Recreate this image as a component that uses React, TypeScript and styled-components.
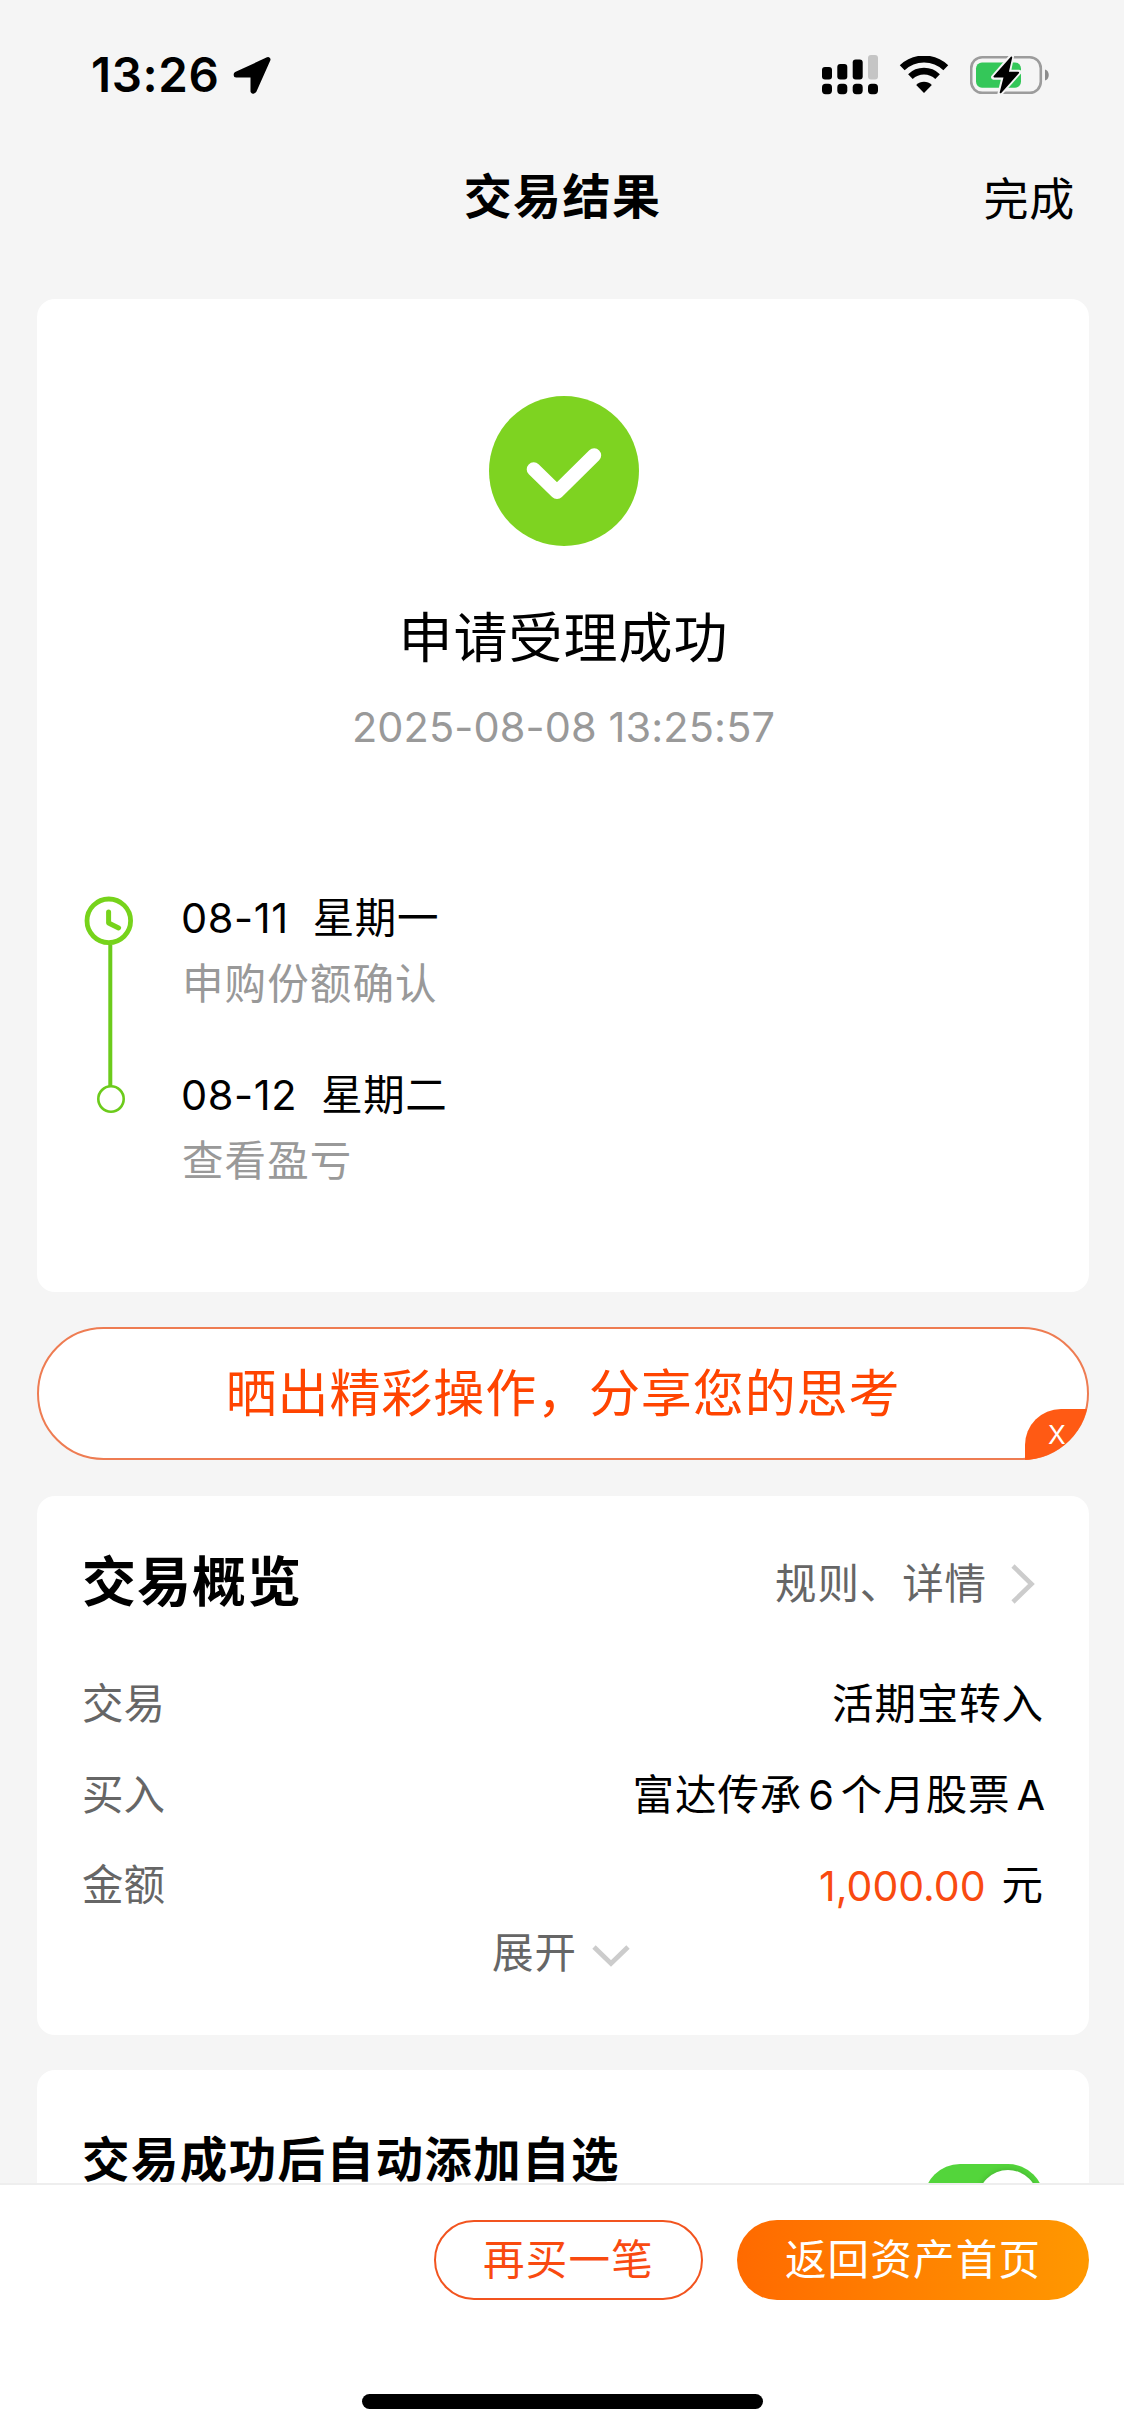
import React from "react";
import styled, { createGlobalStyle } from "styled-components";

const GlobalStyle = createGlobalStyle`
  *, *::before, *::after { box-sizing: border-box; }
  html, body { margin: 0; padding: 0; background: #f5f5f5; }
  body { font-family: Inter, "Noto Sans CJK SC", sans-serif; line-height: 1.2; color: #000; }
`;

const Screen = styled.div`
  width: 1124px;
  height: 2432px;
  display: flex;
  flex-direction: column;
  background: #f5f5f5;
  overflow: hidden;
`;

const StatusBar = styled.div`
  flex: none;
  height: 150px;
  padding: 0 74px 0 91px;
  display: flex;
  align-items: center;
  justify-content: space-between;
`;

const StatusGroup = styled.div<{ $gap: number }>`
  display: flex;
  align-items: center;
  gap: ${(p) => p.$gap}px;
`;

const Time = styled.span`
  font-size: 47.5px;
  font-weight: 600;
  line-height: 60px;
  letter-spacing: 0.6px;
`;

const NavBar = styled.header`
  flex: none;
  height: 93px;
  padding: 0 49px 0 50px;
  display: grid;
  grid-template-columns: 1fr auto 1fr;
  align-items: center;
`;

const NavTitle = styled.h1`
  grid-column: 2;
  margin: 0;
  font-size: 48px;
  font-weight: 700;
  line-height: 60px;
  letter-spacing: 1.4px;
`;

const NavAction = styled.button`
  justify-self: end;
  padding: 6px 0 0;
  border: 0;
  background: none;
  font: inherit;
  font-size: 45px;
  line-height: 60px;
  letter-spacing: 0.7px;
  color: #000;
`;

const Content = styled.main`
  flex: 1;
  min-height: 0;
  overflow: hidden;
  padding: 56px 35px 0 37px;
  display: flex;
  flex-direction: column;
`;

const Card = styled.section`
  flex: none;
  border-radius: 18px;
  background: #fff;
`;

const ResultCard = styled(Card)`
  height: 993px;
  padding: 97px 46px 0 47px;
  display: flex;
  flex-direction: column;
  align-items: center;
`;

const ResultTitle = styled.h2`
  margin: 58px 0 0;
  font-size: 54px;
  font-weight: 400;
  line-height: 70px;
  letter-spacing: 1px;
`;

const ResultTime = styled.div`
  margin-top: 23px;
  font-size: 41.5px;
  line-height: 60px;
  letter-spacing: 0.1px;
  color: #999;
`;

const Timeline = styled.div`
  align-self: stretch;
  margin-top: 129px;
  display: flex;
  gap: 47px;
`;

const Steps = styled.div`
  display: flex;
  flex-direction: column;
  gap: 47px;
`;

const Step = styled.div`
  display: flex;
  flex-direction: column;
`;

const StepDate = styled.div`
  display: flex;
  gap: 24px;
  font-size: 41.5px;
  line-height: 65px;
  letter-spacing: 0.6px;
`;

const StepNote = styled.div`
  padding: 1px 0 0 1px;
  font-size: 41.5px;
  line-height: 64px;
  letter-spacing: 1.1px;
  color: #999;
`;

const ShareBanner = styled.div`
  flex: none;
  position: relative;
  height: 133px;
  margin: 35px 0 36px;
  border: 2px solid #ee7c52;
  border-radius: 67px;
  background: #fff;
  display: flex;
  align-items: center;
  justify-content: center;
`;

const BannerText = styled.span`
  font-size: 51px;
  line-height: 76px;
  letter-spacing: 0.9px;
  color: #ff4400;
`;

const BannerCorner = styled.div`
  position: absolute;
  right: -2px;
  bottom: -2px;
  width: 67px;
  height: 67px;
  border-bottom-right-radius: 67px;
  overflow: hidden;
  display: flex;
  align-items: flex-end;
  justify-content: flex-end;
`;

const BannerClose = styled.button`
  width: 64px;
  height: 51px;
  padding: 0 0 0 23px;
  border: 0;
  border-top-left-radius: 36px;
  background: #ff5a14;
  color: #fff;
  font: inherit;
  font-size: 26px;
  line-height: 51px;
  text-align: left;
`;

const OverviewCard = styled(Card)`
  height: 539px;
  padding: 52px 45px 0 45px;
  display: flex;
  flex-direction: column;
`;

const OverviewHead = styled.div`
  height: 70px;
  margin-bottom: 42px;
  display: flex;
  align-items: center;
  justify-content: space-between;
`;

const OverviewTitle = styled.h2`
  margin: 0;
  font-size: 54px;
  font-weight: 700;
  letter-spacing: 1px;
`;

const DetailLink = styled.a`
  display: flex;
  align-items: center;
  gap: 24px;
  padding: 3px 9px 0 0;
  font-size: 41.5px;
  letter-spacing: 0.9px;
  color: #666;
`;

const Row = styled.div`
  height: 90.4px;
  display: flex;
  align-items: center;
  justify-content: space-between;
  font-size: 41.5px;
`;

const RowLabel = styled.span`
  color: #666;
`;

const RowValue = styled.span`
  display: flex;
  gap: 16px;
  letter-spacing: 0.9px;
  white-space: nowrap;
`;

const Latin = styled.span`
  margin: 0 6px;

  &:last-child {
    margin-right: -2px;
  }
`;

const Amount = styled.span`
  font-size: 41px;
  line-height: 50px;
  color: #f94a10;
  letter-spacing: 0;
`;

const Expand = styled.button`
  align-self: center;
  margin-top: -7px;
  padding: 0 4px 0 0;
  height: 60px;
  border: 0;
  background: none;
  display: flex;
  align-items: center;
  gap: 15px;
  font: inherit;
  font-size: 41.5px;
  letter-spacing: 1px;
  color: #666;
`;

const FavoriteCard = styled(Card)`
  height: 220px;
  margin-top: 35px;
  padding: 55px 45px 0 45px;
  display: flex;
  align-items: flex-start;
  justify-content: space-between;
`;

const FavoriteTitle = styled.h2`
  margin: 0;
  font-size: 47.5px;
  font-weight: 700;
  line-height: 70px;
  letter-spacing: 1.4px;
`;

const Switch = styled.div`
  width: 120px;
  height: 72px;
  margin-top: 39px;
  padding: 6px;
  border-radius: 36px;
  background: #53d53b;
  display: flex;
  justify-content: flex-end;
`;

const Knob = styled.div`
  width: 60px;
  height: 60px;
  border-radius: 50%;
  background: #fff;
  box-shadow: 0 0 6px rgba(0, 0, 0, 0.2);
`;

const Footer = styled.footer`
  flex: none;
  height: 249px;
  padding: 35px 35px 23px 36px;
  border-top: 2px solid #eeeeee;
  background: #fff;
  display: flex;
  flex-direction: column;
  align-items: center;
  justify-content: space-between;
`;

const FooterActions = styled.div`
  align-self: flex-end;
  display: flex;
  gap: 34px;
`;

const PillButton = styled.button<{ $primary?: boolean }>`
  width: ${(p) => (p.$primary ? 352 : 269)}px;
  height: 80px;
  padding: 1px 0 0;
  border: ${(p) => (p.$primary ? "0" : "2px solid #f2541f")};
  border-radius: 40px;
  background: ${(p) =>
    p.$primary ? "linear-gradient(90deg, #ff6a00, #ff9800)" : "#fff"};
  color: ${(p) => (p.$primary ? "#fff" : "#f94a10")};
  font: inherit;
  font-size: 41.5px;
  letter-spacing: 1.2px;
`;

const HomeIndicator = styled.div`
  width: 401px;
  height: 15px;
  border-radius: 8px;
  background: #000;
`;

const LocationIcon = () => (
  <svg width="41" height="41" viewBox="0 0 41 41">
    <path
      d="M4.2 19.3 36 4.6 22.2 35.6 21 36.2V20H4.2Z"
      stroke="#000"
      strokeWidth="5"
      strokeLinejoin="round"
    />
  </svg>
);

const SignalIcon = () => (
  <svg width="56" height="40" viewBox="0 0 56 40">
    <rect x="0" y="12" width="10" height="12.5" rx="3" />
    <rect x="15.3" y="9" width="10" height="15.5" rx="3" />
    <rect x="30.7" y="4.5" width="10" height="20" rx="3" />
    <rect x="46" y="0" width="10" height="24.5" rx="3" fill="#c5c5c5" />
    {[0, 15.3, 30.7, 46].map((x) => (
      <rect key={x} x={x} y="28.8" width="10" height="10.4" rx="3.6" />
    ))}
  </svg>
);

const WifiIcon = () => (
  <svg width="50" height="38" viewBox="0 0 50 38" fill="none" stroke="#000">
    <path d="M3.2 11.8a31.5 31.5 0 0 1 43.6 0" strokeWidth="7" />
    <path d="M11.4 20.6a19.6 19.6 0 0 1 27.2 0" strokeWidth="6.6" />
    <path
      d="M25 37 17.2 29c4.3-4.4 11.3-4.4 15.6 0Z"
      fill="#000"
      stroke="none"
    />
  </svg>
);

const BatteryIcon = () => (
  <svg width="80" height="40" viewBox="0 0 80 40">
    <rect
      x="1.2"
      y="2.2"
      width="69.6"
      height="35.6"
      rx="11"
      fill="none"
      stroke="#9c9c9c"
      strokeWidth="2.6"
    />
    <path d="M75 14.5c5 1.2 5 9.8 0 11Z" fill="#8c8c8c" />
    <rect x="6" y="7.4" width="45" height="25.4" rx="6" fill="#34c759" />
    <path
      d="M41.5 1.5 23.6 22.2H34L30 38.6 49 17.2H38.4Z"
      stroke="#f5f5f5"
      strokeWidth="5"
      strokeLinejoin="round"
    />
    <path
      d="M41.3 2.5 24.4 21.6H34.6L30.6 37.4 48.2 17.6H37.8Z"
      stroke="#000"
      strokeWidth="1.8"
      strokeLinejoin="round"
    />
  </svg>
);

const SuccessIcon = () => (
  <svg width="150" height="150" viewBox="0 0 150 150">
    <circle cx="75" cy="75" r="75" fill="#7ed321" />
    <path
      d="M44.7 73.3 68 96 105.2 59.3"
      fill="none"
      stroke="#fff"
      strokeWidth="14"
      strokeLinecap="round"
      strokeLinejoin="round"
    />
  </svg>
);

const RailDrawing = styled.svg`
  flex: none;
  margin-top: 10px;
`;

const TimelineRail = () => (
  <RailDrawing width="50" height="222" viewBox="0 0 50 222" fill="none">
    <circle cx="24.8" cy="24.8" r="21.8" stroke="#76d31b" strokeWidth="4.8" />
    <path
      d="M24.6 16v11l10 5"
      stroke="#76d31b"
      strokeWidth="5"
      strokeLinecap="round"
      strokeLinejoin="round"
    />
    <path d="M26.3 48.5V190" stroke="#6ccb1b" strokeWidth="4" />
    <circle cx="27" cy="203" r="12.7" stroke="#6ccb1b" strokeWidth="2.6" />
  </RailDrawing>
);

const ChevronRight = () => (
  <svg width="24" height="40" viewBox="0 0 24 40" fill="none">
    <path d="M2 2 20.5 20 2 38" stroke="#ccc" strokeWidth="4.6" />
  </svg>
);

const ChevronDown = () => (
  <svg width="38" height="26" viewBox="0 0 38 26" fill="none">
    <path d="M2 6 19 22.5 36 6" stroke="#ccc" strokeWidth="4.8" />
  </svg>
);

const steps = [
  { date: "08-11", weekday: "星期一", note: "申购份额确认" },
  { date: "08-12", weekday: "星期二", note: "查看盈亏" },
];

export default function App() {
  return (
    <>
      <GlobalStyle />
      <Screen>
        <StatusBar>
          <StatusGroup $gap={13}>
            <Time>13:26</Time>
            <LocationIcon />
          </StatusGroup>
          <StatusGroup $gap={21}>
            <SignalIcon />
            <WifiIcon />
            <BatteryIcon />
          </StatusGroup>
        </StatusBar>
        <NavBar>
          <NavTitle>交易结果</NavTitle>
          <NavAction>完成</NavAction>
        </NavBar>
        <Content>
          <ResultCard>
            <SuccessIcon />
            <ResultTitle>申请受理成功</ResultTitle>
            <ResultTime>2025-08-08 13:25:57</ResultTime>
            <Timeline>
              <TimelineRail />
              <Steps>
                {steps.map((s) => (
                  <Step key={s.date}>
                    <StepDate>
                      <span>{s.date}</span>
                      <span>{s.weekday}</span>
                    </StepDate>
                    <StepNote>{s.note}</StepNote>
                  </Step>
                ))}
              </Steps>
            </Timeline>
          </ResultCard>
          <ShareBanner>
            <BannerText>晒出精彩操作，分享您的思考</BannerText>
            <BannerCorner>
              <BannerClose>X</BannerClose>
            </BannerCorner>
          </ShareBanner>
          <OverviewCard>
            <OverviewHead>
              <OverviewTitle>交易概览</OverviewTitle>
              <DetailLink>
                规则、详情
                <ChevronRight />
              </DetailLink>
            </OverviewHead>
            <Row>
              <RowLabel>交易</RowLabel>
              <RowValue>活期宝转入</RowValue>
            </Row>
            <Row>
              <RowLabel>买入</RowLabel>
              <RowValue>
                <span>
                  富达传承<Latin>6</Latin>个月股票<Latin>A</Latin>
                </span>
              </RowValue>
            </Row>
            <Row>
              <RowLabel>金额</RowLabel>
              <RowValue>
                <Amount>1,000.00</Amount>
                <span>元</span>
              </RowValue>
            </Row>
            <Expand>
              展开
              <ChevronDown />
            </Expand>
          </OverviewCard>
          <FavoriteCard>
            <FavoriteTitle>交易成功后自动添加自选</FavoriteTitle>
            <Switch>
              <Knob />
            </Switch>
          </FavoriteCard>
        </Content>
        <Footer>
          <FooterActions>
            <PillButton>再买一笔</PillButton>
            <PillButton $primary>返回资产首页</PillButton>
          </FooterActions>
          <HomeIndicator />
        </Footer>
      </Screen>
    </>
  );
}
